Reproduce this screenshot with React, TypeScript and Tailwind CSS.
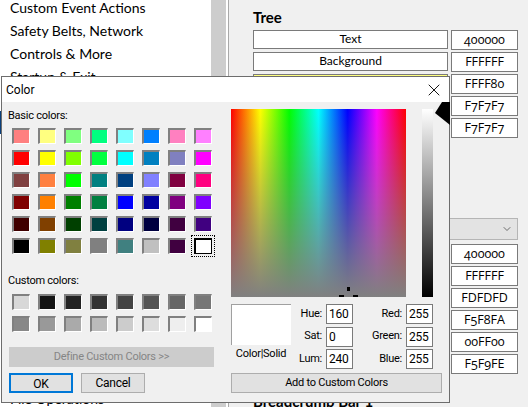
import { X, ChevronDown } from 'lucide-react';

const sidebarItems = [
  'Custom Event Actions',
  'Safety Belts, Network',
  'Controls & More',
  'Startup & Exit',
  '',
  '',
  '',
  '',
  '',
  '',
  '',
  '',
  '',
  '',
  '',
  '',
  '',
  'File Operations',
];

const treeRows = [
  { label: 'Text', hex: '400000', fill: 'bg-white' },
  { label: 'Background', hex: 'FFFFFF', fill: 'bg-white' },
  { label: '', hex: 'FFFF80', fill: 'bg-[#ffff80]' },
  { label: '', hex: 'F7F7F7', fill: 'bg-[#f7f7f7]' },
  { label: '', hex: 'F7F7F7', fill: 'bg-[#f7f7f7]' },
];

const lowerRows = ['400000', 'FFFFFF', 'FDFDFD', 'F5F8FA', '00FF00', 'F5F9FE'];

const basicColors = [
  'bg-[#ff8080]', 'bg-[#ffff80]', 'bg-[#80ff80]', 'bg-[#00ff80]', 'bg-[#80ffff]', 'bg-[#0080ff]', 'bg-[#ff80c0]', 'bg-[#ff80ff]',
  'bg-[#ff0000]', 'bg-[#ffff00]', 'bg-[#80ff00]', 'bg-[#00ff40]', 'bg-[#00ffff]', 'bg-[#0080c0]', 'bg-[#8080c0]', 'bg-[#ff00ff]',
  'bg-[#804040]', 'bg-[#ff8040]', 'bg-[#00ff00]', 'bg-[#008080]', 'bg-[#004080]', 'bg-[#8080ff]', 'bg-[#800040]', 'bg-[#ff0080]',
  'bg-[#800000]', 'bg-[#ff8000]', 'bg-[#008000]', 'bg-[#008040]', 'bg-[#0000ff]', 'bg-[#0000a0]', 'bg-[#800080]', 'bg-[#8000ff]',
  'bg-[#400000]', 'bg-[#804000]', 'bg-[#004000]', 'bg-[#004040]', 'bg-[#000080]', 'bg-[#000040]', 'bg-[#400040]', 'bg-[#400080]',
  'bg-[#000000]', 'bg-[#808000]', 'bg-[#808040]', 'bg-[#808080]', 'bg-[#408080]', 'bg-[#c0c0c0]', 'bg-[#400040]', 'bg-[#ffffff]',
];

const customColors = [
  'bg-[#d8d8d8]', 'bg-[#141414]', 'bg-[#222222]', 'bg-[#333333]', 'bg-[#444444]', 'bg-[#555555]', 'bg-[#666666]', 'bg-[#777777]',
  'bg-[#888888]', 'bg-[#999999]', 'bg-[#aaaaaa]', 'bg-[#bbbbbb]', 'bg-[#cccccc]', 'bg-[#dddddd]', 'bg-[#eeeeee]', 'bg-[#ffffff]',
];

const hslFields = [
  { label: 'Hue:', value: '160' },
  { label: 'Sat:', value: '0' },
  { label: 'Lum:', value: '240' },
];

const rgbFields = [
  { label: 'Red:', value: '255' },
  { label: 'Green:', value: '255' },
  { label: 'Blue:', value: '255' },
];

function Swatch({ color, selected }: { color: string; selected?: boolean }) {
  return (
    <div className="relative h-4 w-[18px]">
      {selected && (
        <div className="absolute -left-[3px] -top-[3px] h-[22px] w-6 border border-dotted border-black" />
      )}
      <div
        className={`h-full w-full border-l-2 border-t-2 border-r border-b ${color} ${
          selected ? 'border-black border-r-black border-b-black' : 'border-l-[#808080] border-t-[#808080] border-r-white border-b-white'
        }`}
      />
    </div>
  );
}

function Field({ label, value, labelWidth }: { label: string; value: string; labelWidth: string }) {
  return (
    <div className="flex h-5 items-center">
      <span className={`${labelWidth} pr-1 text-right`}>{label}</span>
      <div className="flex h-5 w-[27px] items-center border border-[#7a7a7a] bg-white pl-[2px] text-[12px]">{value}</div>
    </div>
  );
}

function ColorDialog() {
  return (
    <div className="absolute left-px top-[76px] h-[327px] w-[449px] border border-[#6d6d6d] bg-[#f0f0f0] font-['Roboto',sans-serif] text-[11px] tracking-[-0.25px] text-black">
      <div className="flex h-[25px] items-center justify-between bg-white pl-[4px] pr-[5px] text-[12px] tracking-normal">
        <span>Color</span>
        <X size={20} strokeWidth={1.1} className="text-black" />
      </div>
      <div className="flex pl-[6px] pt-[7px]">
        <div className="w-[223px]">
          <div className="leading-[14px]">Basic colors:</div>
          <div className="ml-[4px] mt-[5px] grid w-[200px] grid-cols-8 gap-x-2 gap-y-[6px]">
            {basicColors.map((c, i) => (
              <Swatch key={i} color={c} selected={i === basicColors.length - 1} />
            ))}
          </div>
          <div className="mt-5 leading-[14px]">Custom colors:</div>
          <div className="ml-[4px] mt-[6px] grid w-[200px] grid-cols-8 gap-x-2 gap-y-[6px]">
            {customColors.map((c, i) => (
              <Swatch key={i} color={c} />
            ))}
          </div>
          <button className="ml-[1px] mt-[15px] block h-5 w-[205px] bg-[#cccccc] text-[#858585]">
            Define Custom Colors &gt;&gt;
          </button>
          <div className="ml-[1px] mt-[6px] flex gap-2">
            <button className="h-5 w-16 border-2 border-[#0078d7] bg-[#e1e1e1] text-[12px]">OK</button>
            <button className="h-5 w-16 border border-[#adadad] bg-[#e1e1e1] text-[12px]">Cancel</button>
          </div>
        </div>
        <div className="flex-1">
          <div className="flex">
            <div className="relative h-[188px] w-[175px] bg-[linear-gradient(to_right,#ff0000,#ffff00,#00ff00,#00ffff,#0000ff,#ff00ff,#ff0000)]">
              <div className="h-full w-full bg-[linear-gradient(to_bottom,rgba(128,128,128,0),#808080)]" />
              <div className="absolute left-[116px] top-[178px] h-1 w-[3px] bg-black" />
              <div className="absolute left-[108px] top-[186px] h-[2px] w-[5px] bg-black" />
              <div className="absolute left-[122px] top-[186px] h-[2px] w-[5px] bg-black" />
            </div>
            <div className="ml-4 h-[188px] w-[11px] bg-[linear-gradient(to_bottom,#ffffff,#000000)]" />
            <svg className="absolute left-[433px] top-[25px]" width="15" height="23" viewBox="0 0 15 23">
              <polygon points="0,11 7,0 15,0 15,23" fill="#000" />
            </svg>
          </div>
          <div className="mt-[7px] flex">
            <div className="w-[60px]">
              <div className="h-[41px] border-l border-t border-[#a0a0a0] bg-white" />
              <div className="mt-[2px] text-center leading-[14px]">Color|Solid</div>
            </div>
            <div className="ml-px flex flex-col gap-[2.5px]">
              {hslFields.map((f) => (
                <Field key={f.label} label={f.label} value={f.value} labelWidth="w-[34px]" />
              ))}
            </div>
            <div className="ml-[13px] flex flex-col gap-[2.5px]">
              {rgbFields.map((f) => (
                <Field key={f.label} label={f.label} value={f.value} labelWidth="w-[40px]" />
              ))}
            </div>
          </div>
          <button className="mt-[4px] block h-5 w-[211px] border border-[#adadad] bg-[#e1e1e1]">
            Add to Custom Colors
          </button>
        </div>
      </div>
    </div>
  );
}

export default function App() {
  return (
    <div className="relative flex h-[407px] w-[528px] overflow-hidden bg-[#f0f0f0] font-['Lato',sans-serif] text-black">
      <div className="w-[211px] shrink-0 bg-white pl-[10px] text-[14px]">
        <ul className="-mt-[4px]">
          {sidebarItems.map((item, i) => (
            <li key={i} className={`-ml-[10px] flex h-[23px] items-center pl-[10px] ${i === 5 ? 'bg-[#0a3f7a] text-white' : ''}`}>
              {item}
            </li>
          ))}
        </ul>
      </div>
      <div className="w-[15px] shrink-0 bg-[#cdcdcd]" />
      <div className="w-[2px] shrink-0 bg-white" />
      <div className="w-px shrink-0 bg-[#a9a9a9]" />
      <div className="flex-1 pl-6 text-[12px]">
        <h2 className="flex h-[30px] items-center pt-[4px] text-[15px] font-bold">Tree</h2>
        <div className="flex flex-col gap-[2px]">
          {treeRows.map((row, i) => (
            <div key={i} className="flex gap-[3px]">
              <div className={`flex h-[19px] w-[195px] items-center justify-center border border-[#7a7a7a] pb-[2px] ${row.fill}`}>
                {row.label}
              </div>
              <div className="flex h-5 w-[67px] items-center justify-center border border-[#7a7a7a] bg-white font-['Open_Sans',sans-serif] text-[12.5px] [font-feature-settings:'onum']">
                {row.hex}
              </div>
            </div>
          ))}
        </div>
        <div className="mt-[80px] flex h-[22px] w-[265px] items-center justify-end border border-[#b5b5b5] bg-[#e3e3e3] pr-[4px]">
          <ChevronDown size={12} strokeWidth={1.5} className="text-[#444]" />
        </div>
        <div className="mt-1 flex flex-col gap-[2px]">
          {lowerRows.map((hex, i) => (
            <div key={i} className="flex gap-[3px]">
              <div className="h-[19px] w-[195px] border border-[#7a7a7a] bg-white" />
              <div className="flex h-5 w-[67px] items-center justify-center border border-[#7a7a7a] bg-white font-['Open_Sans',sans-serif] text-[12.5px] [font-feature-settings:'onum']">
                {hex}
              </div>
            </div>
          ))}
        </div>
        <h2 className="mt-[17px] text-[15px] font-bold leading-[20px]">Breadcrumb Bar 1</h2>
      </div>
      <ColorDialog />
    </div>
  );
}
